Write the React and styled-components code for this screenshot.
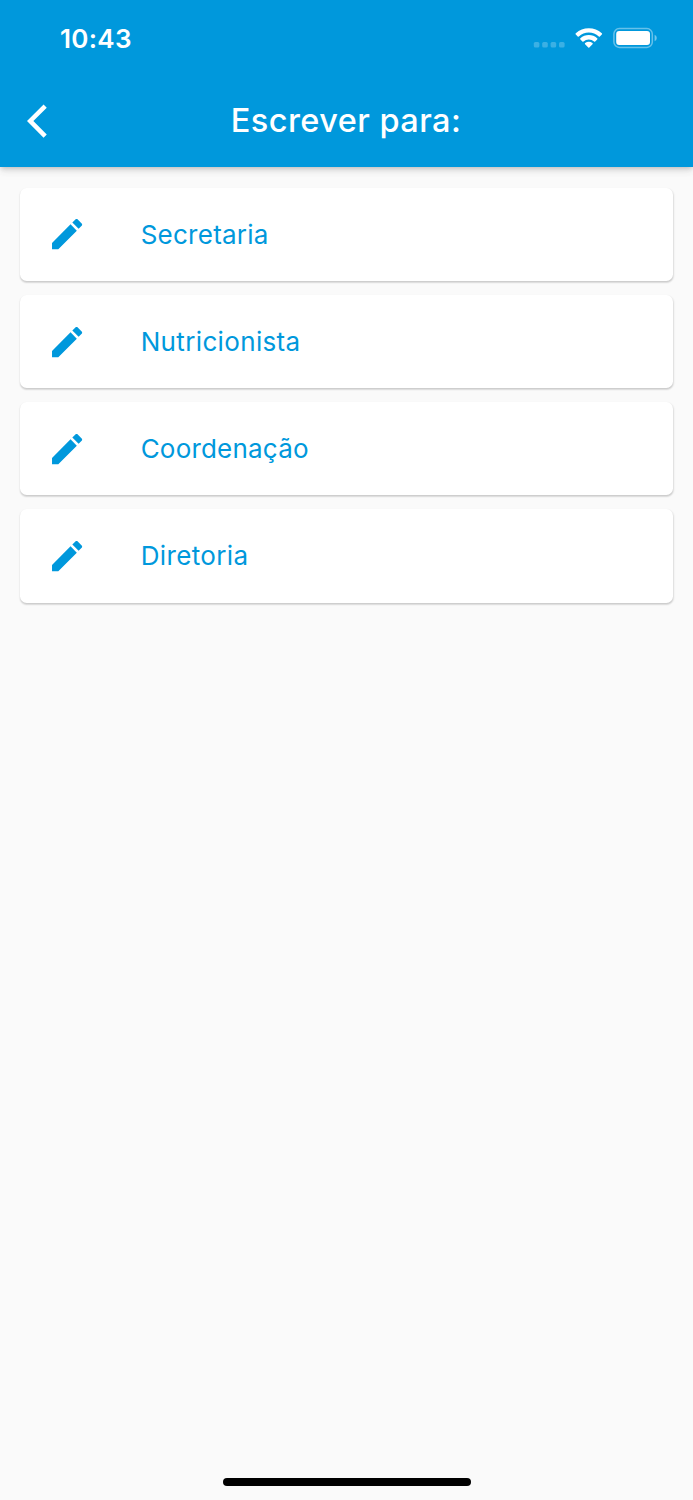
import React from "react";
import styled, { createGlobalStyle } from "styled-components";

const GlobalStyle = createGlobalStyle`
  * {
    box-sizing: border-box;
  }

  body {
    margin: 0;
    background: #fafafa;
    font-family: Inter, "Liberation Sans", sans-serif;
  }
`;

const Screen = styled.div`
  width: 693px;
  height: 1500px;
  display: flex;
  flex-direction: column;
  background: #fafafa;
  overflow: hidden;
`;

const Header = styled.header`
  height: 167.4px;
  flex-shrink: 0;
  background: #0098dc;
  color: #ffffff;
  box-shadow: 0 2px 5px -1px rgba(0, 0, 0, 0.2), 0 5px 7px rgba(0, 0, 0, 0.06),
    0 1px 14px rgba(0, 0, 0, 0.04);
`;

const StatusBar = styled.div`
  height: 74px;
  padding: 2px 36px 0 60px;
  display: flex;
  align-items: center;
  justify-content: space-between;
`;

const Clock = styled.span`
  padding-top: 1px;
  font-size: 26px;
  font-weight: 600;
  line-height: 30px;
  letter-spacing: 0.3px;
`;

const StatusIcons = styled.svg`
  width: 124px;
  height: 24px;
  display: block;
`;

const TitleBar = styled.div`
  height: 93.4px;
  display: grid;
  grid-template-columns: 94px 1fr 94px;
  align-items: center;
`;

const BackButton = styled.button`
  padding: 0 0 0 27px;
  border: 0;
  background: none;
  color: inherit;
  display: flex;
`;

const Title = styled.h1`
  margin: 0;
  padding: 1px 1px 0 0;
  font-size: 32.5px;
  font-weight: 500;
  line-height: 40px;
  letter-spacing: 0.44px;
  text-align: center;
`;

const List = styled.ul`
  flex: 1;
  margin: 0;
  padding: 20.4px 20px 0;
  list-style: none;
  display: flex;
  flex-direction: column;
  gap: 13.6px;
`;

const Card = styled.li`
  height: 93.5px;
  padding-left: 26.8px;
  display: flex;
  align-items: center;
  gap: 53.7px;
  border-radius: 6.7px;
  background: #ffffff;
  color: #0098dc;
  box-shadow: 0 1.5px 1.5px rgba(0, 0, 0, 0.11), 0.5px 1px 2px rgba(0, 0, 0, 0.1);
`;

const Label = styled.span`
  padding-top: 0.6px;
  font-size: 26px;
  line-height: 34px;
  letter-spacing: ${({ spacing }) => spacing};
`;

const HomeArea = styled.footer`
  height: 22px;
  display: flex;
  justify-content: center;
`;

const HomeIndicator = styled.div`
  width: 248px;
  height: 8.4px;
  border-radius: 5px;
  background: #000000;
`;

const contacts = [
  { name: "Secretaria", spacing: "0.25px" },
  { name: "Nutricionista", spacing: "0.35px" },
  { name: "Coordenação", spacing: "0.2px" },
  { name: "Diretoria", spacing: "0.35px" },
];

const PencilIcon = () => (
  <svg width="40.2" height="40.2" viewBox="0 0 24 24" fill="currentColor">
    <path d="M3 17.25V21h3.75L17.81 9.94l-3.75-3.75L3 17.25zM20.71 7.04c.39-.39.39-1.02 0-1.41l-2.34-2.34c-.39-.39-1.02-.39-1.41 0l-1.83 1.83 3.75 3.75 1.83-1.83z" />
  </svg>
);

const BackIcon = () => (
  <svg width="40.2" height="40.2" viewBox="0 0 24 24" fill="currentColor">
    <path d="M11.8 4L9.9 2.1 0 12l9.9 9.9 1.9-1.9L3.8 12z" />
  </svg>
);

const Status = () => (
  <StatusIcons viewBox="0 0 124 24" fill="#ffffff">
    {/* no signal */}
    <g opacity="0.23">
      <rect x="0.8" y="16" width="5.6" height="5.6" rx="1.6" />
      <rect x="9.2" y="16" width="5.6" height="5.6" rx="1.6" />
      <rect x="17.6" y="16" width="5.6" height="5.6" rx="1.6" />
      <rect x="26" y="16" width="5.6" height="5.6" rx="1.6" />
    </g>
    {/* wifi */}
    <path d="M42.8 7.3a19.2 19.2 0 0 1 26 0q.6.6 0 1.2l-1.9 1.9q-.5.5-1.1 0a14.9 14.9 0 0 0-20 0q-.6.5-1.1 0l-1.9-1.9q-.6-.6 0-1.2z" />
    <path d="M47.4 12.2a12.5 12.5 0 0 1 16.8 0q.6.6 0 1.2l-2 2q-.5.5-1.1 0a8 8 0 0 0-10.6 0q-.6.5-1.1 0l-2-2q-.6-.6 0-1.2z" />
    <path d="M52.1 17.1a6 6 0 0 1 7.4 0q.6.5 0 1.1l-3.2 3.2q-.5.5-1 0l-3.2-3.2q-.6-.6 0-1.1z" />
    {/* battery */}
    <rect
      x="80.9"
      y="2.6"
      width="38.4"
      height="18.8"
      rx="5.4"
      fill="none"
      stroke="#ffffff"
      strokeWidth="1.5"
      opacity="0.4"
    />
    <rect x="83.2" y="5" width="33.8" height="14" rx="3" />
    <path d="M121.6 8.8q2.2.9 2.2 3.2t-2.2 3.2z" opacity="0.45" />
  </StatusIcons>
);

const App = () => {
  return (
    <>
      <GlobalStyle />
      <Screen>
        <Header>
          <StatusBar>
            <Clock>10:43</Clock>
            <Status />
          </StatusBar>
          <TitleBar>
            <BackButton aria-label="Voltar">
              <BackIcon />
            </BackButton>
            <Title>Escrever para:</Title>
          </TitleBar>
        </Header>
        <List>
          {contacts.map((item) => (
            <Card key={item.name}>
              <PencilIcon />
              <Label spacing={item.spacing}>{item.name}</Label>
            </Card>
          ))}
        </List>
        <HomeArea>
          <HomeIndicator />
        </HomeArea>
      </Screen>
    </>
  );
};

export default App;
